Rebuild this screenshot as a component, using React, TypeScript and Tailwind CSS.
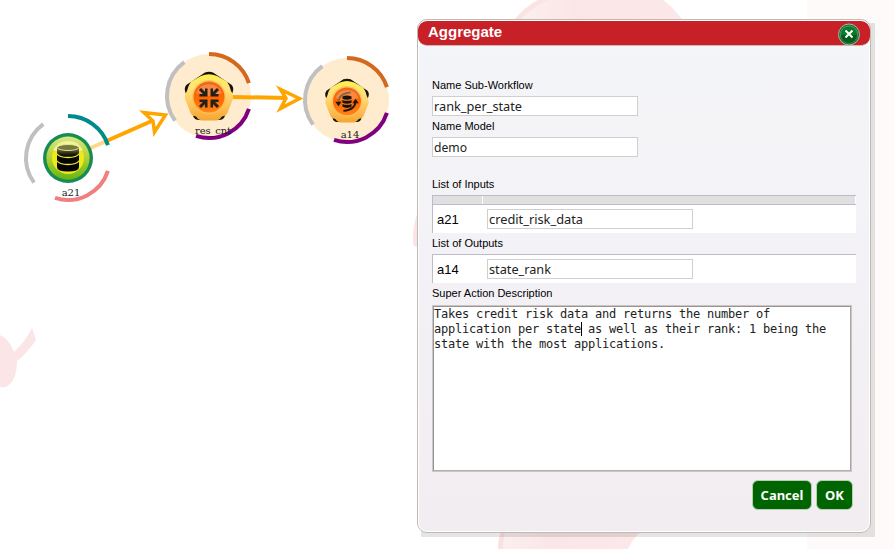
import React from "react";

const LABEL = "font-['Liberation_Sans',Arial,sans-serif] text-[11px] leading-[13px] text-black";

function arc(r: number, from: number, to: number) {
  const p = (a: number) => {
    const t = (a * Math.PI) / 180;
    return `${(r * Math.cos(t)).toFixed(2)} ${(r * Math.sin(t)).toFixed(2)}`;
  };
  return `M${p(from)}A${r} ${r} 0 0 1 ${p(to)}`;
}

function Arcs({ top, bottom }: { top: string; bottom: string }) {
  return (
    <g fill="none" strokeWidth="4">
      <path d={arc(42, -90, -18)} stroke={top} />
      <path d={arc(42, 18, 108)} stroke={bottom} />
      <path d={arc(42, 144, 234)} stroke="#c0c0c0" />
    </g>
  );
}

function Pentagon({ children }: { children: React.ReactNode }) {
  return (
    <g>
      <path
        d="M-4-23.500Q0-25 4-23.500L22-11.500Q25-9 24-5L15.500 21Q14 24 10 24H-10Q-14 24-15.500 21L-24-5Q-25-9-22-11.500Z"
        fill="#17120a"
      />
      <path
        d="M-8-20Q0-23.500 8-20L18-14.500Q21-10 22-5Q24.500-2 24 3L18 18Q16 20 13 20.500Q11 24 8 24.500H-8Q-11 24-13 20.500Q-16 20-18 18L-24 3Q-24.500-2-22-5Q-21-10-18-14.500Z"
        fill="url(#gold)"
      />
      <circle r="17" cy="1" fill="#ffbe58" opacity=".8" />
      <circle r="15.500" cy="1" fill="url(#ember)" />
      <path d="M-13-3A14 14 0 0 1 13-3Q0 3-13-3" fill="#fff" opacity=".22" />
      {children}
    </g>
  );
}

function Drum() {
  return (
    <g transform="translate(0 -1)">
      <path d="M-11-9.500V10Q-11 14.500 0 14.500T11 10V-9.500Z" fill="#050505" />
      <path d="M-11-9.500V-3.500Q-9-.5 0-.5T11-3.500V-9.500Z" fill="url(#sheen)" />
      <ellipse cy="-9.500" rx="10.800" ry="3" fill="#77783a" stroke="#e9ea9a" strokeWidth=".9" />
      <path d="M-11-3.200Q-9 .5 0 .5T11-3.200M-11 3.800Q-9 7.500 0 7.500T11 3.800" fill="none" stroke="#e9e62a" strokeWidth="1.300" />
    </g>
  );
}

function Workflow() {
  return (
    <svg className="absolute inset-0" width="894" height="549" viewBox="0 0 894 549">
      <defs>
        <linearGradient id="gold" x1="0" y1="0" x2="0" y2="1">
          <stop offset="0" stopColor="#fff04a" />
          <stop offset=".3" stopColor="#ffe27c" />
          <stop offset=".65" stopColor="#ffc45c" />
          <stop offset="1" stopColor="#f4a631" />
        </linearGradient>
        <linearGradient id="ember" x1="0" y1="0" x2="0" y2="1">
          <stop offset="0" stopColor="#ee6a1c" />
          <stop offset=".5" stopColor="#ff6503" />
          <stop offset="1" stopColor="#ff8414" />
        </linearGradient>
        <linearGradient id="lime" x1="0" y1="0" x2="0" y2="1">
          <stop offset="0" stopColor="#d8e887" />
          <stop offset=".45" stopColor="#b6d33a" />
          <stop offset="1" stopColor="#69b511" />
        </linearGradient>
        <linearGradient id="sheen" x1="0" y1="0" x2="0" y2="1">
          <stop offset="0" stopColor="#8a8a50" />
          <stop offset=".75" stopColor="#1c1c10" />
          <stop offset="1" stopColor="#050505" />
        </linearGradient>
        <linearGradient id="petal" x1="0" y1="0" x2="1" y2="0">
          <stop offset="0" stopColor="#fbf0f0" />
          <stop offset=".35" stopColor="#fbe6e7" />
          <stop offset="1" stopColor="#fce8e9" />
        </linearGradient>
      </defs>

      <rect x="807" width="87" height="549" fill="#fffafa" />
      <path d="M516 19Q530 4 544 0H663Q673 7 682 19Z" fill="url(#petal)" />
      <path d="M515 19Q526 6 538 0H548Q533 7 521 19Z" fill="#fbe3e4" />
      <path d="M498 549Q498 540 501 531H642Q633 538 628 549Z" fill="url(#petal)" />
      <path d="M498 549Q498 540 501 531H505Q503 540 503 549Z" fill="#fbe0e2" />
      <path d="M418 211Q412 228 413 243Q414 248 418 246Z" fill="#fde3e5" />
      <path d="M0 335Q9 339 14 352Q26 341 32 328L36 340Q27 353 17 361Q17 378 9 385Q5 388 0 387Z" fill="#fbe5e7" />

      <path d="M68 158L154 120" stroke="#ffa500" strokeWidth="4" />
      <path d="M165.500 115L144 112.500L153 121L154.500 132Z" fill="#fff" stroke="#ffa500" strokeWidth="3.500" />

      <g transform="translate(68 158)">
        <circle r="40" fill="#fff" opacity=".55" />
        <Arcs top="#008b8b" bottom="#f08080" />
        <circle r="25" fill="#168b57" />
        <circle r="22" fill="#35a039" />
        <circle r="21.500" fill="url(#lime)" />
        <circle r="16" fill="#eee91b" />
        <path d="M-15-8A17 17 0 0 1 15-8Q0-3-15-8" fill="#fffbd0" opacity=".65" />
        <Drum />
      </g>

      <circle cx="209" cy="96" r="42" fill="#ffebcd" />
      <path d="M209 96.500L287 98" stroke="#ffa500" strokeWidth="4" />
      <path d="M299.500 98.500L280.500 89.500L286 98.200L280.500 108.500Z" fill="#fff" stroke="#ffa500" strokeWidth="3.500" />
      <g transform="translate(209 96)">
        <Arcs top="#d2691e" bottom="#800080" />
        <Pentagon>
          <g transform="translate(0 2)">
            {[0, 90, 180, 270].map((a) => (
              <g key={a} transform={`rotate(${a})`}>
                <path d="M-9-9L-3.500-3.500" stroke="#242017" strokeWidth="3" />
                <path d="M-1.500-9.500V-1.500H-9.500V-4H-4V-9.500Z" fill="#242017" />
              </g>
            ))}
          </g>
        </Pentagon>
      </g>

      <g transform="translate(347 100)">
        <circle r="42" fill="#ffebcd" />
        <Arcs top="#d2691e" bottom="#800080" />
        <g transform="translate(0 .5) scale(.9)">
          <Pentagon>
            <g transform="translate(0 1)">
              <g fill="none" stroke="#20180e">
                <path d="M-9.500 1Q-9-9 4-10" stroke="#85663f" strokeWidth="1.800" />
                <path d="M9.500 0Q9 9.500-4 10.500" strokeWidth="2" />
              </g>
              <path d="M-13 .5H-6L-9.500 5.500ZM6 2H13L9.500-3Z" fill="#20180e" />
              <path d="M-5-5.500Q0-7.500 5-5.500V6Q0 8.500-5 6Z" fill="#17120a" />
              <path d="M-5.500-2.500Q0 0 5.500-2.500M-5.500 2Q0 4.500 5.500 2" fill="none" stroke="#ff7d18" strokeWidth="1.200" />
            </g>
          </Pentagon>
        </g>
      </g>

      <g className="font-['DejaVu_Serif',serif]" fontSize="10" fill="#1a1a1a" textAnchor="middle">
        <text x="71" y="196">a21</text>
        <text x="213" y="134" textLength="36">res_cnt</text>
        <text x="350" y="138">a14</text>
      </g>
    </svg>
  );
}

function Field({ value, width }: { value: string; width: string }) {
  return (
    <div className="flex h-5 w-[206px] items-center border border-[#d0cfcf] bg-white pl-px font-['Noto_Sans',sans-serif] text-[13px] text-[#222]">
      <svg width="200" height="18" className="block overflow-visible">
        <text x="0" y="14" fill="#222" textLength={width} lengthAdjust="spacingAndGlyphs">{value}</text>
      </svg>
    </div>
  );
}

function Row({ name, value, width }: { name: string; value: string; width: string }) {
  return (
    <div className="flex h-[29px] w-[424px] items-center border-l border-t border-[#bebcc8] bg-white">
      <span className="w-[54px] pl-1 pt-[2px] font-['Liberation_Sans',Arial,sans-serif] text-[13px] leading-4 text-black">{name}</span>
      <Field value={value} width={width} />
    </div>
  );
}

function GreenButton({ label, className }: { label: string; className: string }) {
  return (
    <button
      className={`h-[30px] rounded-[6px] border border-[#b7cdb4] bg-[#006400] text-center font-['Noto_Sans',sans-serif] text-[13px] font-bold leading-[28px] text-white ${className}`}
    >
      {label}
    </button>
  );
}

export default function App() {
  return (
    <div className="relative h-[549px] w-[894px] overflow-hidden bg-white">
      <Workflow />
      <div className="absolute left-[421px] top-[23px] h-[514px] w-[454px] bg-black/10" />
      <section className="absolute left-[417px] top-[19px] flex h-[514px] w-[454px] flex-col overflow-hidden rounded-[10px] border border-[#bdbab5] bg-white">
        <header className="mt-px flex h-[25px] w-[452px] shrink-0 items-center justify-between rounded-[9px] border-b border-[#d5b5b2] bg-[#c72127] pl-[10px] pr-[10px]">
          <h1 className="-mt-[2px] font-['Liberation_Sans',Arial,sans-serif] text-[15px] font-bold leading-5 text-white">Aggregate</h1>
          <svg width="22" height="23" viewBox="0 0 22 23" className="mt-[2px] shrink-0">
            <circle cx="11" cy="11.5" r="10.500" fill="#14703a" stroke="#a9b8a5" strokeWidth="1" />
            <circle cx="11" cy="11.5" r="8.500" fill="#087a28" stroke="#4f9a69" strokeWidth="1" />
            <path d="M3 12A8 8 0 0 0 19 12Z" fill="#045c1a" />
            <path d="M7.500 7.500L14.500 14.500M14.500 7.500L7.500 14.500" stroke="#fff" strokeWidth="2" />
          </svg>
        </header>
        <div className="mx-px mb-px flex flex-1 flex-col rounded-b-[8px] bg-gradient-to-b from-[#f4f5f8] via-[#f3f1f5] to-[#f2edf1] pl-[13px] pt-[33px]">
          <label className={LABEL}>Name Sub-Workflow</label>
          <div className="mt-1"><Field value="rank_per_state" width="88" /></div>
          <label className={`mt-1 ${LABEL}`}>Name Model</label>
          <div className="mt-1"><Field value="demo" width="33" /></div>
          <label className={`mt-[21px] ${LABEL}`}>List of Inputs</label>
          <div className="mt-1 flex h-[9px] w-[424px] border-l border-t border-[#bebcc8] bg-white">
            <div className="mr-px w-[49px] bg-[#e0e0e1]" />
            <div className="w-[372px] bg-[#e0e0e1]" />
          </div>
          <Row name="a21" value="credit_risk_data" width="94" />
          <label className={`mt-1 ${LABEL}`}>List of Outputs</label>
          <div className="mt-1"><Row name="a14" value="state_rank" width="62" /></div>
          <label className={`mt-1 ${LABEL}`}>Super Action Description</label>
          <div className="mt-[5px] h-[167px] w-[420px] border border-[#cbc6c4] bg-white">
            <div className="relative h-[165px] w-[418px] border border-b-[#b5adab] border-l-[#999494] border-r-[#aaa4a3] border-t-[#999494]">
              <p className="whitespace-pre font-['DejaVu_Sans_Mono',monospace] text-[12px] leading-[15px] tracking-[-0.224px] text-[#222]">
                {"Takes credit risk data and returns the number of\napplication per state as well as their rank: 1 being the\nstate with the most applications."}
              </p>
              <span className="absolute left-[147px] top-[15px] h-[14px] w-px bg-black" />
            </div>
          </div>
          <div className="mt-2 flex w-[421px] justify-end gap-1">
            <GreenButton label="Cancel" className="w-[60px]" />
            <GreenButton label="OK" className="w-[37px]" />
          </div>
        </div>
      </section>
    </div>
  );
}
